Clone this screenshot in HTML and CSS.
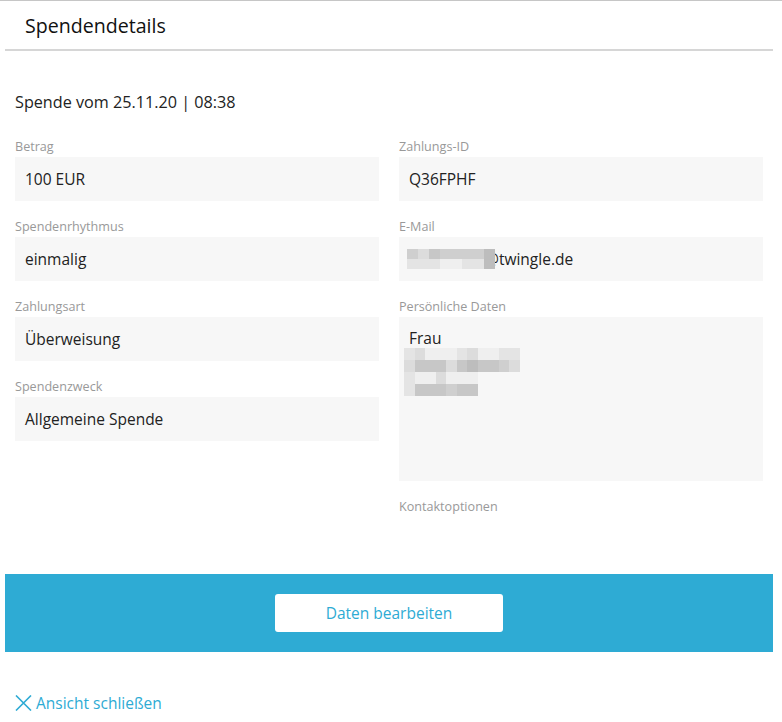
FILE: index.html
```html
<!DOCTYPE html>
<html lang="de">
<head>
  <meta charset="UTF-8">
  <meta name="viewport" content="width=device-width, initial-scale=1.0">
  <title>Spendendetails</title>
  <link rel="stylesheet" href="styles.css">
</head>
<body>
  <div class="panel">
    <div class="panel-header">
      <h2>Spendendetails</h2>
    </div>

    <div class="panel-body">
      <h3 class="donation-title">Spende vom 25.11.20 | 08:38</h3>

      <div class="columns">
        <div class="column">
          <div class="field">
            <div class="field-label">Betrag</div>
            <div class="field-value">100 EUR</div>
          </div>
          <div class="field">
            <div class="field-label">Spendenrhythmus</div>
            <div class="field-value">einmalig</div>
          </div>
          <div class="field">
            <div class="field-label">Zahlungsart</div>
            <div class="field-value">Überweisung</div>
          </div>
          <div class="field">
            <div class="field-label">Spendenzweck</div>
            <div class="field-value">Allgemeine Spende</div>
          </div>
        </div>

        <div class="column">
          <div class="field">
            <div class="field-label">Zahlungs-ID</div>
            <div class="field-value">Q36FPHF</div>
          </div>
          <div class="field">
            <div class="field-label">E-Mail</div>
            <div class="field-value email">
              <span class="mosaic mosaic-mail">
                <i class="m4"></i><i class="m3"></i><i class="m5"></i><i class="m4"></i><i class="m4"></i><i class="m4"></i><i class="m4"></i><i class="m6"></i>
                <i class="m2"></i><i class="m2"></i><i class="m2"></i><i class="m1"></i><i class="m1"></i><i class="m2"></i><i class="m2"></i><i class="m6"></i>
              </span>@twingle.de
            </div>
          </div>
          <div class="field">
            <div class="field-label">Persönliche Daten</div>
            <div class="field-value address">
              <div>Frau</div>
              <div class="mosaic mosaic-address">
                <i class="m2"></i><i class="m3"></i><i class="m1"></i><i class="m1"></i><i class="m1"></i><i class="m2"></i><i class="m3"></i><i class="m1"></i><i class="m1"></i><i class="m2"></i><i class="m2"></i>
                <i class="m3"></i><i class="m5"></i><i class="m5"></i><i class="m5"></i><i class="m3"></i><i class="m5"></i><i class="m6"></i><i class="m5"></i><i class="m5"></i><i class="m4"></i><i class="m3"></i>
                <i class="m2"></i><i class="m1"></i><i class="m1"></i><i class="m3"></i><i class="m1"></i><i class="m1"></i><i class="m1"></i><i></i><i></i><i></i><i></i>
                <i class="m2"></i><i class="m5"></i><i class="m5"></i><i class="m5"></i><i class="m4"></i><i class="m5"></i><i class="m5"></i><i></i><i></i><i></i><i></i>
              </div>
            </div>
          </div>
          <div class="field">
            <div class="field-label">Kontaktoptionen</div>
          </div>
        </div>
      </div>
    </div>

    <div class="action-bar">
      <button class="btn-edit">Daten bearbeiten</button>
    </div>

    <a class="close-link" href="#">
      <svg width="17" height="16" viewBox="0 0 17 16">
        <path d="M1 0.5 L16 15.5 M16 0.5 L1 15.5" stroke="#2eabd4" stroke-width="1.6" fill="none"/>
      </svg>
      Ansicht schließen
    </a>
  </div>
</body>
</html>
```

FILE: styles.css
```css
/* Spendendetails Ansicht */
body {
  margin: 0;
  padding: 0;
  background: #fff;
  border-top: 1px solid #c6c6c6;
  font-family: "Open Sans", "Noto Sans", Arial, sans-serif;
  color: #222;
}
.panel {
  margin: 0 9px 0 5px;
}
.panel-header {
  height: 48px;
  border-bottom: 2px solid #d6d6d6;
  padding: 0 20px;
  display: flex;
  align-items: center;
}
.panel-header h2 {
  margin: 0;
  font-size: 19.6px;
  font-weight: 500;
  color: #111;
}
.panel-body {
  padding: 39px 10px 0;
}
.donation-title {
  margin: 0 0 23px;
  font-size: 16.2px;
  font-weight: 400;
  line-height: 24px;
  color: #222;
}
.columns {
  display: grid;
  grid-template-columns: 1fr 1fr;
  column-gap: 20px;
}
.field {
  margin-bottom: 16px;
}
.field-label {
  font-size: 12.6px;
  line-height: 18px;
  padding-top: 1px;
  margin-bottom: 1px;
  color: #999;
}
.field-value {
  background: #f7f7f7;
  height: 44px;
  padding: 0 10px;
  box-sizing: border-box;
  display: flex;
  align-items: center;
  font-size: 15.5px;
  color: #222;
}
.field-value.email {
  padding-left: 8px;
}
.field-value.address {
  display: block;
  height: 164px;
  padding: 11px 5px;
  line-height: 20px;
}
.field-value.address > div:first-child {
  padding-left: 5px;
}
.mosaic {
  display: grid;
}
.mosaic i {
  display: block;
}
.mosaic-mail {
  grid-template-columns: repeat(8, 11px);
  grid-template-rows: 10px 10px;
  position: relative;
  z-index: 1;
  margin-right: -10px;
}
.mosaic-address {
  width: 116px;
  grid-template-columns: repeat(11, 1fr);
  grid-auto-rows: 12px;
}
.m1 { background: #efefef; }
.m2 { background: #e4e4e4; }
.m3 { background: #dcdcdc; }
.m4 { background: #cfcfcf; }
.m5 { background: #c7c7c7; }
.m6 { background: #bdbdbd; }

.action-bar {
  margin-top: 42px;
  background: #2eabd4;
  padding: 20px;
  display: flex;
  justify-content: center;
}
.btn-edit {
  width: 228px;
  height: 38px;
  background: #fff;
  border: none;
  border-radius: 3px;
  font-family: inherit;
  font-size: 15.5px;
  color: #2eabd4;
  cursor: pointer;
}
.close-link {
  display: inline-flex;
  align-items: center;
  gap: 4px;
  margin: 41px 0 0 10px;
  font-size: 15.5px;
  line-height: 20px;
  color: #2eabd4;
  text-decoration: none;
}
```
